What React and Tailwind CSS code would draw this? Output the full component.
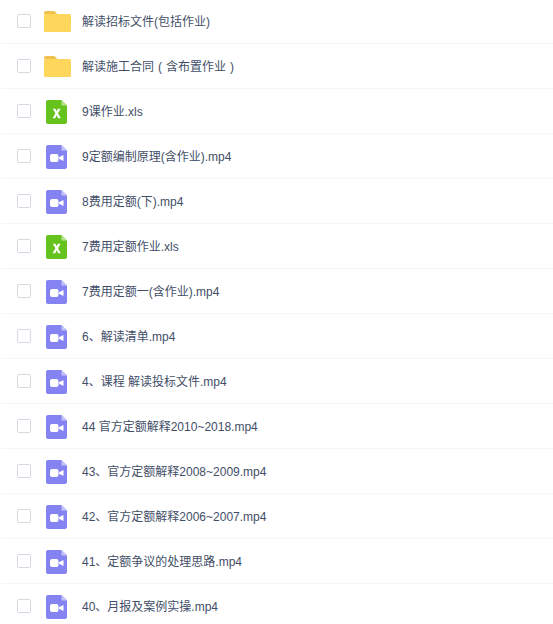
import React from 'react';

const files = [
  { id: 1, name: '解读招标文件(包括作业)', type: 'folder' },
  {
    id: 2,
    name: (
      <>
        解读施工合同<span className="mx-1">(</span>含布置作业<span className="mx-1">)</span>
      </>
    ),
    type: 'folder',
  },
  { id: 3, name: '9课作业.xls', type: 'xls' },
  { id: 4, name: '9定额编制原理(含作业).mp4', type: 'video' },
  { id: 5, name: '8费用定额(下).mp4', type: 'video' },
  { id: 6, name: '7费用定额作业.xls', type: 'xls' },
  { id: 7, name: '7费用定额一(含作业).mp4', type: 'video' },
  { id: 8, name: '6、解读清单.mp4', type: 'video' },
  { id: 9, name: '4、课程 解读投标文件.mp4', type: 'video' },
  { id: 10, name: '44 官方定额解释2010~2018.mp4', type: 'video' },
  { id: 11, name: '43、官方定额解释2008~2009.mp4', type: 'video' },
  { id: 12, name: '42、官方定额解释2006~2007.mp4', type: 'video' },
  { id: 13, name: '41、定额争议的处理思路.mp4', type: 'video' },
  { id: 14, name: '40、月报及案例实操.mp4', type: 'video' },
];

function FolderIcon() {
  return (
    <svg width="27" height="24" viewBox="0 0 27 24">
      <path d="M0 3 Q0 1 2 1 H9.5 Q11 1 12 2.5 L13 4 H0 Z" fill="#f0c14f" />
      <rect x="0" y="4" width="27" height="18" rx="1.5" fill="#ffd65c" />
    </svg>
  );
}

function SheetIcon({ color, fold, children }) {
  return (
    <svg className="ml-[2px]" width="21" height="24" viewBox="0 0 21 24">
      <path d="M2 0 H15.5 L21 5.5 V22 Q21 24 19 24 H2 Q0 24 0 22 V2 Q0 0 2 0 Z" fill={color} />
      <path d="M15.5 0 L21 5.5 H15.5 Z" fill={fold} />
      {children}
    </svg>
  );
}

function FileIcon({ type }) {
  if (type === 'folder') return <FolderIcon />;
  if (type === 'xls') {
    return (
      <SheetIcon color="#66c31e" fold="#b5e28f">
        <path
          d="M6.8 8.7 H9.4 L10.7 11.3 L12 8.7 H14.6 L12 13.3 L14.8 18.2 H12.2 L10.7 15.3 L9.2 18.2 H6.6 L9.4 13.3 Z"
          fill="#fff"
        />
      </SheetIcon>
    );
  }
  return (
    <SheetIcon color="#8583f1" fold="#c4c3f8">
      <rect x="4" y="9" width="8.5" height="8" rx="2" fill="#fff" />
      <path d="M13 12.2 L17.5 10 V16 L13 13.8 Z" fill="#fff" />
    </SheetIcon>
  );
}

export default function App() {
  return (
    <div className="-mt-px h-[625px] overflow-hidden bg-white pl-px font-['Liberation_Sans','Noto_Sans_CJK_SC',sans-serif]">
      {files.map((file) => (
        <div key={file.id} className="flex h-[45px] items-center border-b border-[#f4f6fb] pl-4">
          <span className="h-[14px] w-[14px] shrink-0 rounded-[2px] border border-[#d5d9e2] bg-white" />
          <span className="ml-[13px] mt-[2px] flex h-6 w-[27px] shrink-0 items-center">
            <FileIcon type={file.type} />
          </span>
          <span className="ml-[11px] mt-[2px] text-xs text-[#424e67]">{file.name}</span>
        </div>
      ))}
    </div>
  );
}
